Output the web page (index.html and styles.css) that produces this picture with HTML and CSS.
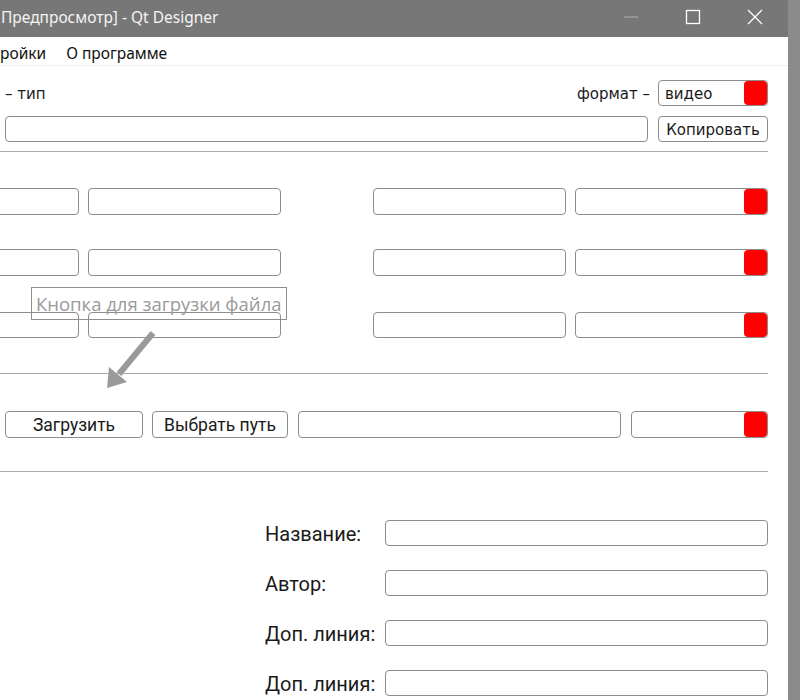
FILE: index.html
```html
<!DOCTYPE html>
<html lang="ru">
<head>
<meta charset="utf-8">
<title>Qt Designer</title>
<link rel="stylesheet" href="styles.css">
</head>
<body>
<div class="window">
  <div class="titlebar">
    <span class="title">Предпросмотр] - Qt Designer</span>
    <div class="controls">
      <span class="ctl"><svg width="16" height="16" viewBox="0 0 16 16"><line x1="1" y1="8" x2="15" y2="8" stroke="#a8a8a8" stroke-width="1.2"/></svg></span>
      <span class="ctl"><svg width="16" height="16" viewBox="0 0 16 16"><rect x="1.5" y="1.5" width="13" height="13" fill="none" stroke="#fff" stroke-width="1.3"/></svg></span>
      <span class="ctl"><svg width="16" height="16" viewBox="0 0 16 16"><path d="M1 1 L15 15 M15 1 L1 15" stroke="#fff" stroke-width="1.3"/></svg></span>
    </div>
  </div>
  <div class="menubar">
    <span class="menu-item">ройки</span>
    <span class="menu-item">О программе</span>
  </div>
  <div class="content">
    <div class="row-top">
      <span class="lbl">– тип</span>
      <div class="fmt">
        <span class="lbl">формат –</span>
        <div class="field combo">видео<span class="red"></span></div>
      </div>
    </div>
    <div class="row-copy">
      <div class="field grow"></div>
      <div class="btn w110 dv">Копировать</div>
    </div>
    <div class="sep sep1"></div>
    <div class="grid-row ra">
      <div class="pair"><div class="field w193"></div><div class="field w193"></div></div>
      <div class="pair"><div class="field w193"></div><div class="field w193"><span class="red"></span></div></div>
    </div>
    <div class="grid-row rb">
      <div class="pair"><div class="field w193"></div><div class="field w193"></div></div>
      <div class="pair"><div class="field w193"></div><div class="field w193"><span class="red"></span></div></div>
    </div>
    <div class="grid-row rc">
      <div class="pair"><div class="field w193"></div><div class="field w193"></div></div>
      <div class="pair"><div class="field w193"></div><div class="field w193"><span class="red"></span></div></div>
    </div>
    <div class="sep sep2"></div>
    <div class="row-btns">
      <div class="btn b1">Загрузить</div>
      <div class="btn b2">Выбрать путь</div>
      <div class="field grow"></div>
      <div class="field w137"><span class="red"></span></div>
    </div>
    <div class="sep sep3"></div>
    <div class="form">
      <span class="flabel">Название:</span><div class="field"></div>
      <span class="flabel">Автор:</span><div class="field"></div>
      <span class="flabel">Доп. линия:</span><div class="field"></div>
      <span class="flabel">Доп. линия:</span><div class="field"></div>
    </div>
  </div>
  <div class="tip">Кнопка для загрузки файла</div>
  <svg class="arrow" width="60" height="70" viewBox="0 0 60 70">
    <line x1="53" y1="8" x2="19" y2="49" stroke="#9a9a9a" stroke-width="6"/>
    <polygon points="7,63 27,57 9,42" fill="#9a9a9a"/>
  </svg>
</div>
</body>
</html>
```

FILE: styles.css
```css
html, body {
  margin: 0;
  padding: 0;
}
body {
  background: #8b8b8b;
  width: 800px;
  height: 700px;
  overflow: hidden;
}
.window {
  position: relative;
  width: 788px;
  height: 700px;
  background: #fff;
}
.titlebar {
  height: 37px;
  background: #777777;
  display: flex;
  align-items: center;
}
.title {
  font-family: "Noto Sans", sans-serif;
  font-size: 15.5px;
  color: #f4f4f4;
  padding-left: 1px;
  padding-bottom: 4px;
}
.controls {
  margin-left: auto;
  margin-right: 2px;
  display: flex;
}
.ctl {
  width: 62px;
  height: 37px;
  display: flex;
  align-items: center;
  justify-content: center;
  padding-bottom: 4px;
  box-sizing: border-box;
}
.menubar {
  height: 29px;
  border-bottom: 1px solid #f0f0f0;
  display: flex;
  align-items: center;
  gap: 20px;
  padding-top: 3px;
  box-sizing: border-box;
  font-family: "Noto Sans", sans-serif;
  font-size: 15.5px;
  color: #111;
}
.content {
  padding: 0 20px 0 5px;
  font-family: "DejaVu Sans", sans-serif;
  font-size: 15px;
  color: #1a1a1a;
}
.row-top {
  margin-top: 14px;
  height: 26px;
  display: flex;
  align-items: center;
  justify-content: space-between;
}
.lbl { padding-top: 2px; }
.fmt {
  display: flex;
  align-items: center;
  gap: 8px;
}
.field {
  position: relative;
  box-sizing: border-box;
  height: 26px;
  border: 1px solid #8d8d8d;
  border-radius: 4px;
  background: #fff;
}
.combo {
  width: 110px;
  padding: 2px 0 0 6px;
  display: flex;
  align-items: center;
  font-size: 15px;
}
.red {
  position: absolute;
  right: 0;
  top: 0;
  bottom: 0;
  width: 23px;
  background: #ff0000;
  border-radius: 4px;
}
.row-copy {
  margin-top: 10px;
  display: flex;
  gap: 10px;
}
.grow { flex: 1; }
.btn {
  box-sizing: border-box;
  height: 26px;
  border: 1px solid #8d8d8d;
  border-radius: 4px;
  background: #fff;
  display: flex;
  align-items: center;
  justify-content: center;
}
.w110 { width: 110px; }
.dv { font-size: 15px; padding-top: 1px; }
.sep {
  height: 1px;
  background: #ababab;
  margin-left: -5px;
}
.sep1 { margin-top: 9px; }
.grid-row {
  margin-left: -119px;
  display: flex;
  justify-content: space-between;
}
.ra { margin-top: 36px; height: 27px; }
.rb { margin-top: 34px; height: 27px; }
.rc { margin-top: 36px; height: 26px; }
.grid-row .field { height: 100%; }
.pair {
  display: flex;
  gap: 9px;
}
.w193 { width: 193px; }
.w137 { width: 137px; }
.sep2 { margin-top: 35px; }
.row-btns {
  margin-top: 37px;
  height: 27px;
  display: flex;
  gap: 10px;
  font-family: "Roboto", sans-serif;
  font-size: 17.5px;
}
.row-btns .field, .row-btns .btn { height: 27px; }
.b1 { width: 138px; margin-right: -1px; }
.b2 { width: 136px; }
.sep3 { margin-top: 33px; }
.form {
  margin-top: 48px;
  padding-left: 260px;
  display: grid;
  grid-template-columns: 120px 1fr;
  row-gap: 24px;
  align-items: center;
  font-family: "Roboto", sans-serif;
  font-size: 20px;
  color: #1a1a1a;
}
.flabel { padding-top: 1px; }
.tip {
  position: absolute;
  left: 31px;
  top: 287px;
  width: 256px;
  height: 33px;
  box-sizing: border-box;
  border: 1px solid #8f8f8f;
  font-family: "Open Sans", sans-serif;
  font-size: 18.5px;
  color: #9a9a9a;
  padding-left: 4px;
  line-height: 31px;
  white-space: nowrap;
}
.arrow {
  position: absolute;
  left: 100px;
  top: 325px;
}
```
